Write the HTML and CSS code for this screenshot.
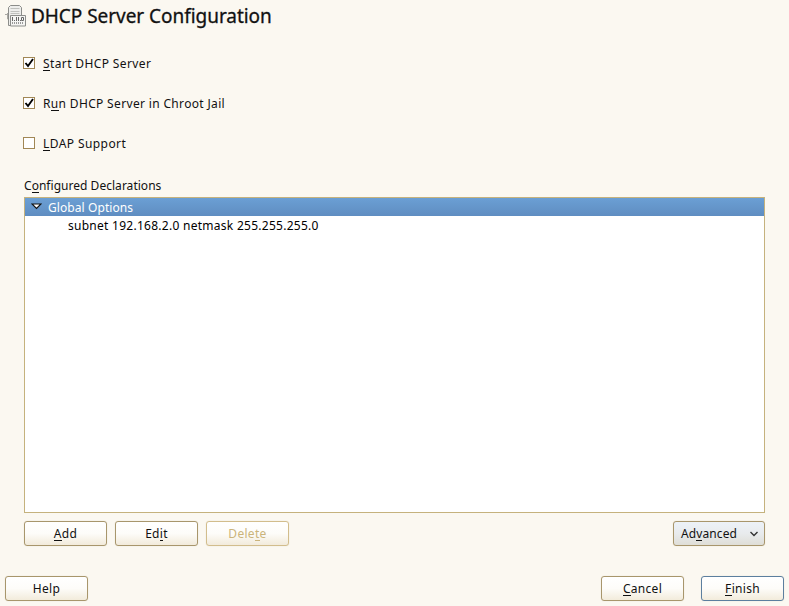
FILE: index.html
```
<!DOCTYPE html>
<html lang="en">
<head>
<meta charset="utf-8">
<title>DHCP Server Configuration</title>
<link rel="stylesheet" href="styles.css">
</head>
<body>
<header class="header">
  <svg class="logo" width="22" height="24" viewBox="0 0 22 24">
    <path d="M0 10.500h3M2.500 9v6h2" fill="none" stroke="#aaa9a5"/>
    <path d="M3.500 3.500l2-2h9l2 2v18h-13z" fill="#eeeeec" stroke="#8c8d8a"/>
    <path d="M5.500 4.500h9M5.500 7.500h9M5.500 9.500h9" stroke="#c0c1be"/>
    <path d="M5.500 11.500h15v10.500h-15z" fill="#f5f5f3" stroke="#8c8d8a"/>
    <path d="M7.500 13v4M11.500 13v4M13.500 13v4" stroke="#666"/>
    <path d="M9 16.500h1M15 16.500h1M16.500 13.500h2v3h-2z" fill="none" stroke="#666"/>
    <path d="M7 19h12" stroke="#999" stroke-width="2" stroke-dasharray="1 1"/>
  </svg>
  <h1 class="title">DHCP Server Configuration</h1>
</header>
<main class="main">
  <label class="option"><span class="box"><svg width="12" height="12" viewBox="0 0 12 12"><path d="M2.500 6l2.500 3 5-7" class="tick"/></svg></span><span class="start"><u>S</u>tart DHCP Server</span></label>
  <label class="option"><span class="box"><svg width="12" height="12" viewBox="0 0 12 12"><path d="M2.500 6l2.500 3 5-7" class="tick"/></svg></span><span class="run">R<u>u</u>n DHCP Server in Chroot Jail</span></label>
  <label class="option"><span class="box"></span><span class="ldap"><u>L</u>DAP Support</span></label>
  <div class="caption">C<u>o</u>nfigured Declarations</div>
  <section class="tree">
    <div class="row selected"><svg class="arrow" width="11" height="7" viewBox="0 0 11 7"><path d="M1 1h9L5.500 5.500z" fill="#fff" stroke="#111" stroke-width="1.200"/></svg><span class="global">Global Options</span></div>
    <div class="row child">subnet 192.168.2.0 netmask 255.255.255.0</div>
  </section>
  <div class="actions">
    <button class="btn"><span><u>A</u>dd</span></button>
    <button class="btn"><span>Ed<u>i</u>t</span></button>
    <button class="btn disabled" disabled><span>Dele<u>t</u>e</span></button>
    <button class="btn advanced"><span>Ad<u>v</u>anced</span><svg width="10" height="6" viewBox="0 0 10 6"><path d="M1.500 1l3.500 3.500L8.500 1" fill="none" stroke="#333" stroke-width="1.400"/></svg></button>
  </div>
</main>
<footer class="footer">
  <button class="btn"><span>Help</span></button>
  <button class="btn cancel"><span><u>C</u>ancel</span></button>
  <button class="btn finish"><span><u>F</u>inish</span></button>
</footer>
</body>
</html>
```
FILE: styles.css
```
* { box-sizing: border-box; }
body {
  margin: 0;
  width: 789px;
  height: 606px;
  overflow: hidden;
  background: #fbf8f1;
  color: #111;
  font: 12px/18px "Noto Sans", "DejaVu Sans", sans-serif;
  letter-spacing: .3px;
}
u { text-decoration: none; box-shadow: inset 0 -1px currentColor; display: inline-block; height: 16px; line-height: 18px; vertical-align: top; }
.header { display: flex; height: 34px; padding: 4px 0 0 5px; }
.logo { flex: none; }
.title { margin: 0 0 0 4px; font-size: 19px; line-height: 25px; font-weight: 400; letter-spacing: -.04px; white-space: nowrap; -webkit-text-stroke: .3px #111; }
.main { width: 741px; margin-left: 24px; }
.option { display: flex; align-items: center; height: 18px; margin: 20px 0 22px -1px; gap: 8px; white-space: nowrap; }
.option + .option { margin-top: 0; }
.start, .run, .ldap { padding-top: 2px; letter-spacing: .38px; }
.run { letter-spacing: .34px; }
.ldap { letter-spacing: .42px; }
.box { width: 12px; height: 12px; border: 1px solid #a18755; background: #fff; }
.box svg { display: block; margin: -1px; }
.tick { fill: none; stroke: #000; stroke-width: 1.9; }
.caption { height: 18px; margin-top: 25px; letter-spacing: .03px; }
.tree { height: 316px; margin-top: 2px; border: 1px solid #c5b27d; background: #fff; }
.row { display: flex; align-items: center; height: 18px; white-space: nowrap; }
.selected { background: linear-gradient(#6b9fd4, #5f8dc1); color: #fff; letter-spacing: .08px; }
.global { padding-top: 2px; }
.arrow { margin: 0 6px 1px 6px; }
.child { padding: 2px 0 0 43px; color: #000; letter-spacing: .27px; }
.actions { display: flex; gap: 8px; margin-top: 8px; }
.btn { display: flex; align-items: center; justify-content: center; width: 83px; height: 25px; padding: 1px 0 0; border: 1px solid #a8966c; border-radius: 3px; background: linear-gradient(#fff, #fdfcf9 50%, #f2ebdb); color: #111; font: inherit; letter-spacing: inherit; box-shadow: 0 0 1px #d8d0bd; }
.btn span { display: block; height: 18px; white-space: nowrap; }
.disabled { border-color: #d2bd8c; color: #cbb47b; }
.advanced { width: 92px; margin-left: auto; justify-content: space-between; padding: 1px 5px 0 7px; letter-spacing: .1px; background: linear-gradient(#edf2f8, #e8ebed 50%, #dfded7); }
.footer { display: flex; margin-top: 30px; padding: 0 5px; }
.cancel { margin-left: auto; }
.finish { margin-left: 17px; border-color: #5c7f9f; }
```
